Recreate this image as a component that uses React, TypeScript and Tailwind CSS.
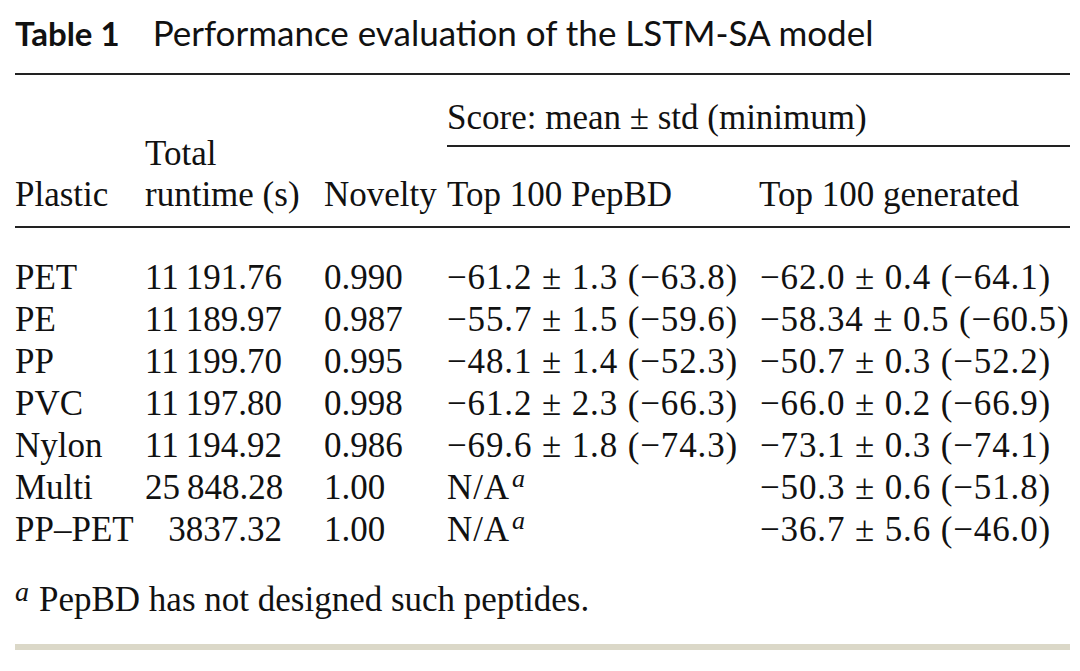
import React from "react";

const serif = { fontFamily: '"Liberation Serif", "Times New Roman", serif' };

type Row = { p: string; rt: string; nov: string; a: React.ReactNode; b: string };

const Sup = () => (
  <span className="italic text-[26px] leading-none relative top-[-12px] ml-[2px]">a</span>
);

const rows: Row[] = [
  { p: "PET", rt: "11\u2009191.76", nov: "0.990", a: "−61.2 ± 1.3 (−63.8)", b: "−62.0 ± 0.4 (−64.1)" },
  { p: "PE", rt: "11\u2009189.97", nov: "0.987", a: "−55.7 ± 1.5 (−59.6)", b: "−58.34 ± 0.5 (−60.5)" },
  { p: "PP", rt: "11\u2009199.70", nov: "0.995", a: "−48.1 ± 1.4 (−52.3)", b: "−50.7 ± 0.3 (−52.2)" },
  { p: "PVC", rt: "11\u2009197.80", nov: "0.998", a: "−61.2 ± 2.3 (−66.3)", b: "−66.0 ± 0.2 (−66.9)" },
  { p: "Nylon", rt: "11\u2009194.92", nov: "0.986", a: "−69.6 ± 1.8 (−74.3)", b: "−73.1 ± 0.3 (−74.1)" },
  { p: "Multi", rt: "25\u2009848.28", nov: "1.00", a: <>N/A<Sup /></>, b: "−50.3 ± 0.6 (−51.8)" },
  { p: "PP–PET", rt: "3837.32", nov: "1.00", a: <>N/A<Sup /></>, b: "−36.7 ± 5.6 (−46.0)" },
];

const math = "tracking-[0.025em]";

export default function App() {
  return (
    <div className="w-[1080px] h-[671px] bg-white text-[#111] overflow-hidden">
      <div className="px-[15px] pt-[11px]">
        <div
          className="h-[42px] leading-[42px] whitespace-nowrap flex items-baseline"
          style={{ fontFamily: 'Lato, "Open Sans", sans-serif' }}
        >
          <span className="font-bold text-[33px]">Table 1</span>
          <span className="ml-[33px] text-[35px]">Performance evaluation of the LSTM-SA model</span>
        </div>
        <div className="mt-[20px] h-[2px] w-[1055px] bg-[#222]" />

        <div style={serif} className="text-[35px]">
          {/* header */}
          <div className="grid grid-cols-[130px_179px_123px_310px_313px] grid-rows-[72px_79px]">
            <div className="row-span-2 flex items-end pb-[11px] leading-[41px]">Plastic</div>
            <div className="row-span-2 flex items-end pb-[11px] leading-[41px] whitespace-nowrap">
              <div>Total<br />runtime (s)</div>
            </div>
            <div className="row-span-2 flex items-end pb-[11px] leading-[41px]">Novelty</div>
            <div className="col-span-2 flex flex-col justify-end">
              <div className="leading-[42px] whitespace-nowrap">Score: mean ± std (minimum)</div>
              <div className="mt-[6px] h-[2px] bg-[#222]" />
            </div>
            <div className="flex items-end pb-[11px] leading-[41px] whitespace-nowrap">Top 100 PepBD</div>
            <div className="flex items-end pb-[11px] leading-[41px] whitespace-nowrap pl-[2px]">Top 100 generated</div>
          </div>
          <div className="h-[2px] w-[1055px] bg-[#222]" />

          {/* body */}
          <div className="pt-[29px]">
            {rows.map((r) => (
              <div
                key={r.p}
                className="grid grid-cols-[130px_179px_123px_313px_310px] h-[42px] leading-[42px] whitespace-nowrap"
              >
                <div>{r.p}</div>
                <div className="text-right pr-[42px]">{r.rt}</div>
                <div>{r.nov}</div>
                <div className={math}>{r.a}</div>
                <div className={math}>{r.b}</div>
              </div>
            ))}
          </div>

          <div className="mt-[28px] h-[42px] leading-[42px] whitespace-nowrap">
            <span className="italic text-[28px] relative top-[-10px]">a</span>
            <span className="ml-[10px]">PepBD has not designed such peptides.</span>
          </div>
        </div>

        <div className="mt-[23px] h-[6px] w-[1055px] bg-[#dbd8c8]" />
      </div>
    </div>
  );
}
